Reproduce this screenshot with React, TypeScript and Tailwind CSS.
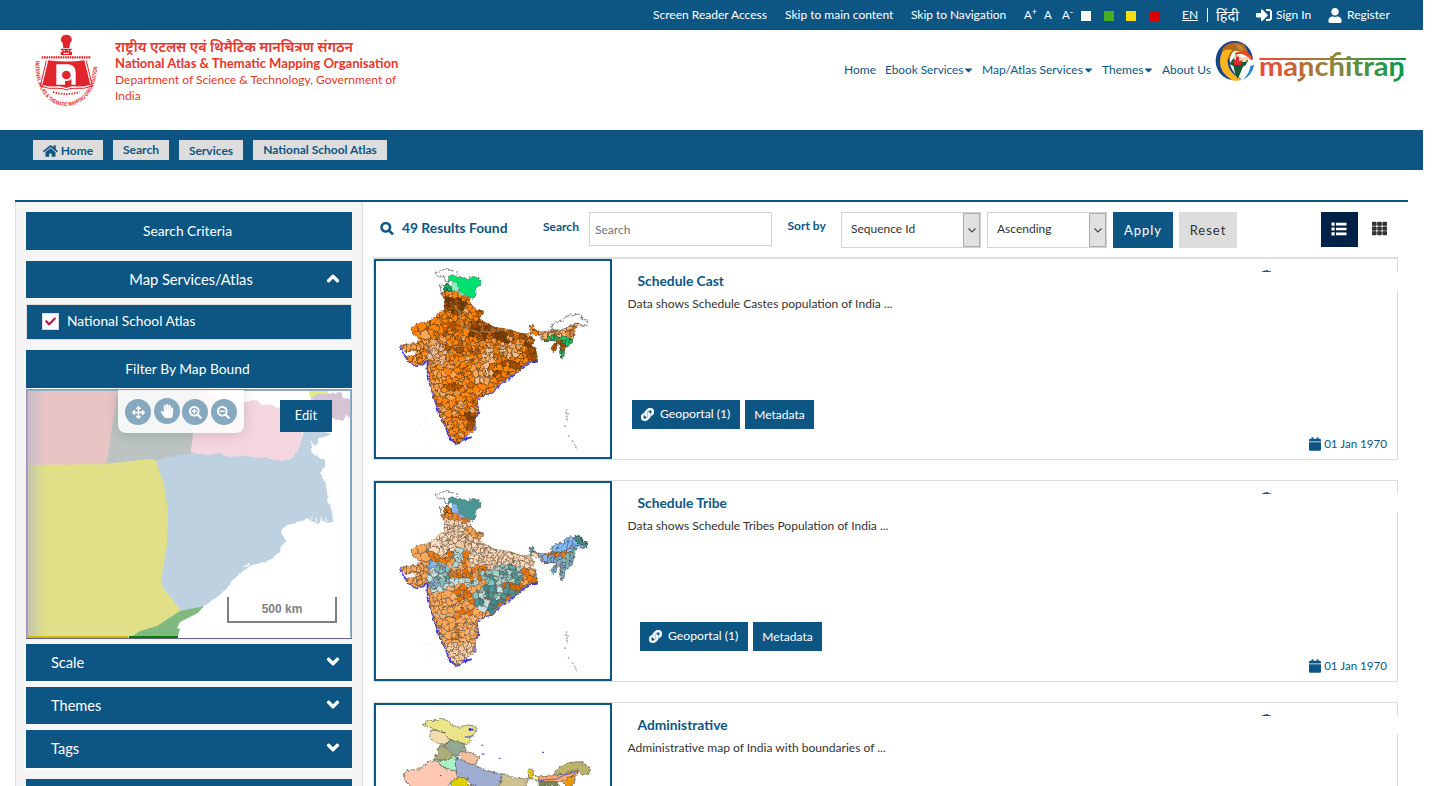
import React from "react";
import {
  FaArrowsAlt, FaCalendar, FaCaretDown, FaCheck, FaChevronDown, FaChevronUp, FaHandPaper,
  FaHome, FaLink, FaSearch, FaSearchMinus, FaSearchPlus, FaSignInAlt, FaTh, FaUser,
} from "react-icons/fa";

type Pt = [number, number];

function rng(seed: number) {
  let s = seed;
  return () => {
    s = (s * 1664525 + 1013904223) % 4294967296;
    return s / 4294967296;
  };
}

function clipHalf(poly: Pt[], a: Pt, b: Pt): Pt[] {
  const mx = (a[0] + b[0]) / 2, my = (a[1] + b[1]) / 2;
  const nx = b[0] - a[0], ny = b[1] - a[1];
  const side = (p: Pt) => (p[0] - mx) * nx + (p[1] - my) * ny;
  const out: Pt[] = [];
  poly.forEach((p, i) => {
    const q = poly[(i + 1) % poly.length];
    const sp = side(p), sq = side(q);
    if (sp <= 0) out.push(p);
    if (sp * sq < 0) {
      const t = sp / (sp - sq);
      out.push([p[0] + (q[0] - p[0]) * t, p[1] + (q[1] - p[1]) * t]);
    }
  });
  return out;
}

/** Irregular district cells: Voronoi cells of a jittered grid, sparser in the west. */
function buildCells() {
  const r = rng(77);
  const pts: Pt[] = [];
  for (let y = 40; y < 570; y += 12)
    for (let x = 70; x < 640; x += 13) {
      const px = x + r() * 15, py = y + r() * 14, drop = r();
      const limit = px < 200 && py < 250 ? 0.7 : py > 310 && py < 480 ? 0.38 : 0.15;
      if (drop > limit) pts.push([px, py]);
    }
  return pts.map((p) => {
    let poly: Pt[] = [[p[0] - 34, p[1] - 34], [p[0] + 34, p[1] - 34], [p[0] + 34, p[1] + 34], [p[0] - 34, p[1] + 34]];
    for (const q of pts) {
      if (q !== p && Math.abs(q[0] - p[0]) < 70 && Math.abs(q[1] - p[1]) < 70) poly = clipHalf(poly, p, q);
    }
    return { c: p, d: poly.map((v) => v[0].toFixed(1) + "," + v[1].toFixed(1)).join(" "), k: r() };
  });
}
const cells = buildCells();

const MAINLAND =
  "208,92 197,100 210,120 205,150 188,160 180,172 160,186 130,188 108,205 118,225 135,240 120,250 78,256 80,266 96,276 125,272 128,278 108,288 90,290 100,303 120,315 145,312 160,295 158,330 166,375 180,420 195,465 212,500 225,535 245,552 262,540 275,528 297,512 300,480 310,458 305,420 325,405 350,397 375,372 410,345 430,335 445,318 465,303 487,303 483,265 470,255 480,240 464,222 440,220 400,208 360,202 330,187 313,176 326,153 300,147 288,132 284,112 262,104 245,85 228,92";
const NORTHEAST =
  "462,200 475,192 478,208 500,216 530,210 560,210 585,195 608,185 612,192 598,215 594,240 588,256 570,262 568,285 562,297 555,292 555,262 548,250 543,270 534,278 528,264 545,242 500,242 499,228 465,220";
const LADAKH = "220,50 232,44 252,52 276,56 292,50 308,49 318,62 316,75 302,85 303,105 294,116 272,106 262,100 250,92 246,68 222,64";
const ARUNACHAL = "528,202 540,188 562,182 572,170 592,164 606,160 620,168 620,178 638,180 634,196 622,200 612,190 598,190 580,200 560,210 530,210";

const inside = (c: Pt, cx: number, cy: number, rx: number, ry: number) =>
  ((c[0] - cx) / rx) ** 2 + ((c[1] - cy) / ry) ** 2 < 1;
const pick = (k: number, list: string[]) => list[Math.floor(k * list.length)];

function castFill(c: Pt, k: number) {
  if (c[0] > 495) {
    if (inside(c, 580, 242, 18, 16) || inside(c, 561, 282, 14, 20) || inside(c, 525, 238, 30, 9)) return "#12c46f";
    return c[1] > 240 ? "#b85d0b" : pick(k, ["#f9ad6a", "#fbc393", "#e08a3c"]);
  }
  if (c[0] < 240 && c[1] < 95) return "#17b868";
  if (inside(c, 235, 135, 40, 26)) return pick(k, ["#7a3a00", "#6f3805", "#9d4d04", "#a65100"]);
  if (inside(c, 330, 210, 50, 35)) return pick(k, ["#7a3b00", "#a65100", "#c46409", "#8a4300"]);
  if (inside(c, 420, 230, 60, 26)) return pick(k, ["#a65100", "#e87807", "#7a3b00", "#fba04d"]);
  if (inside(c, 470, 275, 22, 25)) return "#a65100";
  if (inside(c, 235, 205, 40, 30) || inside(c, 270, 265, 60, 22)) return pick(k, ["#ff8309", "#b65800", "#d66b05", "#fb8a1d"]);
  if (inside(c, 190, 280, 28, 32)) return pick(k, ["#f9b67c", "#e5bd96", "#fba858"]);
  if (inside(c, 375, 280, 65, 26)) return pick(k, ["#f9b67c", "#e8c29d", "#fba858", "#e87807"]);
  if (inside(c, 330, 345, 28, 34)) return pick(k, ["#f3bd8c", "#fba858"]);
  if (c[0] < 205 && c[1] > 230) return pick(k, ["#fba04d", "#f98a1c", "#fba858"]);
  if (inside(c, 285, 485, 20, 30)) return pick(k, ["#b65800", "#8b4200", "#ff8309"]);
  if (inside(c, 240, 385, 16, 12)) return "#b65800";
  if (inside(c, 250, 435, 16, 14)) return "#fba858";
  if (inside(c, 395, 330, 50, 32)) return pick(k, ["#d66b05", "#ff8309", "#a65100"]);
  return pick(k, ["#ff8309", "#ff8309", "#ff8309", "#ff8309", "#fb8a1d", "#fba04d", "#d66b05"]);
}

function tribeFill(c: Pt, k: number) {
  if (c[0] > 485) return c[1] < 222 && c[0] > 505 && c[1] > 205 && c[0] < 570 ? "#ef7d15" : pick(k, ["#86b8f2", "#7badea", "#78b4ba"]);
  if (c[0] > 455 && c[1] < 210) return "#50999a";
  if (c[1] < 95) return pick(k, ["#ef7d15", "#cfe3e0", "#e07109"]);
  if (c[1] < 118) return "#ee8730";
  if (inside(c, 300, 145, 40, 20)) return "#ffa858";
  if (inside(c, 190, 285, 32, 50)) return pick(k, ["#4f9799", "#86c2c2", "#c6e2e0", "#86b8f2"]);
  if (inside(c, 340, 350, 42, 42)) return pick(k, ["#4f9799", "#3e8a8c", "#c6e2e0", "#86c2c2"]);
  if (inside(c, 380, 278, 70, 26)) return pick(k, ["#86c2c2", "#4f9799", "#a8d0cf"]);
  if (inside(c, 265, 300, 60, 12)) return "#c3e2df";
  if (inside(c, 245, 232, 14, 28)) return "#b5dbd9";
  if (c[1] > 485) return "#fdcda3";
  if (c[1] < 215 && c[0] < 220 && c[0] > 160) return "#fddcbf";
  if (c[0] < 175) return "#ffa858";
  if (c[1] < 255 && (c[0] > 285 || c[1] < 205)) return pick(k, ["#fdd6b3", "#fddcbf", "#f3c8a2"]);
  if (c[1] < 300) return pick(k, ["#ee7300", "#ffa858", "#f07d10"]);
  if (inside(c, 400, 330, 60, 40)) return pick(k, ["#ee7300", "#4f9799", "#d96800"]);
  if (inside(c, 280, 350, 40, 42) || inside(c, 235, 425, 20, 50)) return pick(k, ["#ee7300", "#ffa858"]);
  return pick(k, ["#ffa858", "#ffa858", "#fba04d", "#ffb570"]);
}

function DistrictMap({ id, fill, ladakh, zone, arunachal, line }: {
  id: string; fill: (c: Pt, k: number) => string; ladakh: string; zone: string; arunachal: string; line: string;
}) {
  const wobble = id + "w";
  return (
    <svg viewBox="3 3 702 588" className="block h-[196px] w-[234px]">
      <clipPath id={id}>
        <polygon points={MAINLAND} />
        <polygon points={NORTHEAST} />
      </clipPath>
      <filter id={wobble} x="-5%" y="-5%" width="110%" height="110%">
        <feTurbulence type="fractalNoise" baseFrequency="0.1" numOctaves="3" seed="4" result="n" />
        <feDisplacementMap in="SourceGraphic" in2="n" scale="12" xChannelSelector="R" yChannelSelector="G" />
      </filter>
      <g filter={"url(#" + wobble + ")"}>
        <polyline points="158,295 158,330 166,375 180,420 195,465 212,500 225,535 245,552 262,540 290,531" fill="none" stroke="#3a30f0" strokeWidth="6" />
        <polyline points="76,262 90,290 102,306 122,318 146,314 160,296" fill="none" stroke="#4a40e8" strokeWidth="4" />
        <polyline points="300,512 300,480 311,458 306,420 326,406 352,399 377,374 412,347 445,322 465,306 487,306" fill="none" stroke="#4a3ff0" strokeWidth="4" />
        <rect x="466" y="294" width="22" height="14" fill="#2a22e8" />
        <g clipPath={"url(#" + id + ")"}>
          {cells.map((cell, i) => (
            <polygon key={i} points={cell.d} fill={fill(cell.c, cell.k)} stroke={line} strokeWidth="1.7" />
          ))}
        </g>
        <polygon points={MAINLAND} fill="none" stroke="#55402c" strokeWidth="1.4" />
        <polygon points={NORTHEAST} fill="none" stroke="#444" strokeWidth="1.6" />
        <polygon points={LADAKH} fill={ladakh} stroke="#5d6b62" strokeWidth="2" />
        <polygon points="232,66 246,68 250,92 270,104 262,106 244,94 228,90" fill={zone} stroke="#667" strokeWidth="1" />
        <path d="M204 74 L226 72 230 92 208 96z M214 72 L218 96 M204 84 L230 82" fill={id === "m1" ? "#17b868" : "#ef7d15"} stroke="#2b3b2b" strokeWidth="2" />
        <polygon points={ARUNACHAL} fill={arunachal} stroke="#444" strokeWidth="2" />
        {arunachal !== "#fff" && (
          <g>
            <polygon points="596,166 608,160 620,168 620,178 637,180 633,196 606,182" fill="#3f8a80" stroke="#333" strokeWidth="2" />
            <path d="M545 205 l8 -18 M560 205 l10 -32 M575 200 l8 -32 M590 192 l4 -28" stroke="#334a66" strokeWidth="2" fill="none" />
          </g>
        )}
        <path d="M180 40 L196 32 218 27 240 35 256 47 M180 40 L190 51 208 50 212 66 222 64 M197 72 L196 98 206 106" fill="none" stroke="#555" strokeWidth="2" />
        <path d="M225 125 L250 150 262 200 300 215 400 212 M160 250 L200 240 240 260 330 250 360 265 440 250 M170 290 L230 310 300 290 310 320 M170 400 L240 395 300 410 M240 400 L270 450 310 455 M210 470 L240 455 260 500" fill="none" stroke="#b9b3ab" strokeWidth="2" />
      </g>
      <path d="M575 448 l-2 12 6 2 -5 10 4 12 M570 496 v5 M579 526 l4 4 M590 542 l8 4 M598 552 l8 16" fill="none" stroke="#aaa" strokeWidth="5" strokeDasharray="5 3" />
      <path d="M134 494 h5 M150 486 h6 M164 510 h3 M148 543 h3" stroke="#ddd" strokeWidth="2" />
    </svg>
  );
}

function AdminMap() {
  const s = { stroke: "#555344", strokeWidth: 2 };
  return (
    <svg viewBox="18 30 702 588" className="block h-[196px] w-[234px]">
      <filter id="adminw" x="-5%" y="-5%" width="110%" height="110%">
        <feTurbulence type="fractalNoise" baseFrequency="0.12" numOctaves="3" seed="9" result="n" />
        <feDisplacementMap in="SourceGraphic" in2="n" scale="12" xChannelSelector="R" yChannelSelector="G" />
      </filter>
      <g filter="url(#adminw)">
        <polygon points="160,88 172,78 200,76 212,70 232,77 250,92 270,98 290,90 310,92 318,100 312,120 296,128 302,140 288,150 262,138 240,134 222,114 196,104 178,96" fill="#ece488" {...s} />
        <polygon points="180,106 200,106 222,114 240,134 228,150 198,144 180,130" fill="#f3dcae" {...s} />
        <polygon points="228,146 242,136 262,138 286,152 288,168 266,182 250,184 236,170 222,154" fill="#94a994" {...s} />
        <polygon points="214,150 226,156 248,178 238,196 190,194 202,178 204,160" fill="#a9ad78" {...s} />
        <polygon points="200,198 238,194 250,186 260,186 256,206 262,224 248,228 232,220 208,208" fill="#a8f3c3" {...s} />
        <polygon points="266,182 274,170 300,172 330,186 314,210 290,204" fill="#f3c0a0" {...s} />
        <polygon points="100,240 112,226 150,222 180,196 200,198 214,214 246,226 262,232 266,250 240,262 220,300 110,300 120,270 104,254" fill="#fec8b1" {...s} />
        <polygon points="260,186 290,204 316,212 344,226 398,238 392,262 360,300 310,276 290,250 262,246 256,208" fill="#9fadd2" {...s} />
        <polygon points="242,264 266,246 294,252 290,268 320,272 310,300 250,300" fill="#ddd000" {...s} />
        <polygon points="396,236 430,248 476,252 466,272 480,285 470,300 380,300 392,262" fill="#cfc08f" {...s} />
        <polygon points="474,226 488,222 490,238 504,246 504,254 476,248" fill="#f0c800" {...s} />
        <polygon points="490,240 504,246 508,258 480,250" fill="#fff3a6" {...s} />
        <polygon points="504,246 548,242 580,238 620,222 630,230 606,244 570,262 510,260" fill="#fbaa69" {...s} />
        <polygon points="548,238 566,218 600,202 634,200 646,210 662,218 656,238 634,238 622,224 580,238" fill="#bdb46c" {...s} />
        <polygon points="506,260 560,260 566,272 508,274" fill="#7a8a52" {...s} />
        <polygon points="596,246 616,240 612,268 590,280 580,262" fill="#e99a10" {...s} />
      </g>
      <path d="M508 256 L560 252 584 240 626 228" stroke="#5a5ae8" strokeWidth="3" fill="none" />
      <path d="M284 126 h20 M334 177 h10 M386 190 h6 M516 172 h6 M334 151 h5 M210 242 h5" stroke="#3a3af0" strokeWidth="3" fill="none" />
      <path d="M296 104 h14 M300 99 v8" stroke="#2a2af0" strokeWidth="5" />
    </svg>
  );
}

function Emblem() {
  return (
    <svg viewBox="0 0 240 240" className="h-[80px] w-[80px] overflow-visible">
      <g fill="#e0262c">
        <path d="M110 22 q2 -8 14 -8 q12 0 14 8 q6 10 -3 18 l-2 14 h-18 l-2 -14 q-9 -8 -3 -18z" />
        <path d="M108 56 h32 v5 h-4 v5 h5 v9 h-34 v-9 h5 v-5 h-4z" />
        <path d="M70 91 Q124 98 178 91 L196 164 Q174 172 150 169 Q134 168 124 174 Q112 168 98 169 Q72 172 52 164z" />
      </g>
      <path d="M116 62 h4 M128 62 h4 M116 70 h16" stroke="#fff" strokeWidth="3" />
      <path d="M64 92 L46 168 Q70 178 98 175 Q116 174 124 180 Q132 174 150 175 Q178 178 202 168 L184 92" stroke="#e0262c" strokeWidth="3" fill="none" />
      <path d="M94 103 H130 Q152 105 152 128 V164 H139 V146 Q134 153 124 153 H120 V164 H94z" fill="#fff" />
      <circle cx="124" cy="135" r="13" fill="#e0262c" />
      <path d="M50 82 H198" stroke="#e0262c" strokeWidth="7" strokeDasharray="5 2" />
      <path d="M84 186 Q124 198 164 186" stroke="#e0262c" strokeWidth="6" strokeDasharray="4 4" fill="none" />
      <path id="ring" d="M32 92 C22 274 226 274 216 92" fill="none" />
      <text fill="#e0262c" fontFamily="Liberation Sans" fontWeight="700" fontSize="17">
        <textPath href="#ring" textLength="352" lengthAdjust="spacingAndGlyphs">NATIONAL ATLAS &amp; THEMATIC MAPPING ORGANISATION</textPath>
      </text>
    </svg>
  );
}

function Manchitran() {
  return (
    <svg viewBox="0 0 600 132" className="h-[44px] w-[200px]">
      <defs>
        <linearGradient id="mg" gradientUnits="userSpaceOnUse" x1="136" y1="0" x2="572" y2="0">
          <stop offset="0" stopColor="#f0483a" />
          <stop offset="0.5" stopColor="#8f8437" />
          <stop offset="1" stopColor="#009b4c" />
        </linearGradient>
        <linearGradient id="gg" x1="0" y1="0" x2="1" y2="1">
          <stop offset="0" stopColor="#15417e" />
          <stop offset="1" stopColor="#1d4ba0" />
        </linearGradient>
      </defs>
      <ellipse cx="58" cy="62" rx="56" ry="59" fill="url(#gg)" />
      <path d="M22 26 Q48 -4 88 14 L100 38 84 52 62 48 44 60 24 48z" fill="#b9691c" />
      <path d="M40 22 l14 10 10 -14 8 20 -20 14z" fill="#8d7a2a" />
      <path d="M60 12 l20 6 8 16 -16 -6z" fill="#c98a3c" />
      <path d="M22 34 Q-2 90 52 121 Q70 124 82 119 Q40 100 38 66 Q36 48 52 30 Q34 26 22 34z" fill="#fbb51b" />
      <path d="M56 34 Q40 50 46 76 Q54 102 82 119 L100 106 Q116 86 116 62 Q94 28 56 34z" fill="#fff" />
      <path d="M60 38 Q98 22 115 60 L104 58 Q88 36 60 44z" fill="#ee4a1d" />
      <path d="M54 56 l10 -12 12 14 24 2 -8 16 -8 4 -10 24 -6 12 -8 -18 -5 -20 -12 -6z" fill="#185a35" />
      <path d="M54 54 l14 -10 12 8 24 0 -12 14 -24 0z" fill="#f3d3b0" />
      <path d="M54 60 q14 8 28 0 l-4 15 h-20z" fill="#e2232a" />
      <path d="M63 50 h9 v14 h-9z" fill="#e2232a" />
      <path d="M84 119 Q110 108 118 74 L106 78 Q104 100 84 119z" fill="#2388d3" />
      <rect x="133" y="54" width="440" height="6" fill="url(#mg)" />
      <text x="132" y="108" textLength="438" lengthAdjust="spacingAndGlyphs" fill="url(#mg)" fontFamily="Lato" fontWeight="700" fontSize="78">manchitran</text>
      <path d="M268 102 q-2 16 -20 20 M558 102 q-4 18 -22 20 M356 50 q8 -14 22 -8" stroke="url(#mg)" strokeWidth="8" fill="none" />
    </svg>
  );
}

function BoundMap() {
  return (
    <svg viewBox="26 389 326 250" className="block h-[250px] w-[326px]">
      <defs>
        <linearGradient id="fade" x1="0" x2="1" y1="0" y2="0">
          <stop offset="0" stopColor="#b0b8c8" stopOpacity="0.65" />
          <stop offset="1" stopColor="#b0b8c8" stopOpacity="0" />
        </linearGradient>
        <filter id="coast" x="-2%" y="-2%" width="104%" height="104%">
          <feTurbulence type="fractalNoise" baseFrequency="0.2" numOctaves="2" seed="3" result="n" />
          <feDisplacementMap in="SourceGraphic" in2="n" scale="3" xChannelSelector="R" yChannelSelector="G" />
        </filter>
      </defs>
      <rect x="26" y="389" width="326" height="250" fill="#fff" />
      <polygon points="26,389 119,389 114,420 111,440 109,455 105,466 26,467" fill="#e8c4c5" />
      <g filter="url(#coast)">
        <polygon points="199,380 210,392 230,403 245,402 257,400 258,404 272,405 290,411 300,424 303,437 297,452 291,459 282,462 275,462 190,462 185,453 192,435 195,410" fill="#f4d6e1" />
        <polygon points="303,432 312,431 325,432 331,434 325,437 318,438 318,443 314,446 312,440 311,452 317,457 325,460 325,467 320,473 326,484 328,500 332,512 333,522 326,523 322,520 318,523 310,521 308,518 300,522 287,525 282,529 281,533 286,541 281,547 280,551 270,560 250,566 243,571 234,579 227,588 219,596 203,606 180,613 170,598 163,590 160,582 162,568 166,545 167,510 163,485 155,461 165,457 178,454 190,453 208,455 221,453 226,457 240,456 265,458 282,461 291,459 297,452 303,437" fill="#bed1e1" />
        <polygon points="308,380 328,380 328,393 316,394 310,398" fill="#dced7b" />
        <polygon points="310,398 316,394 330,393 341,392 343,398 356,400 356,420 346,415 343,421 332,418 320,408" fill="#d6c3d3" />
        <path d="M243 567 l6 -4 1 2 -6 2z" fill="#fff" />
        <path d="M311 517 v5 M316 518 v5 M321 517 v5 M326 518 v5" stroke="#fff" strokeWidth="0.8" />
      </g>
      <polygon points="119,389 199,389 195,410 192,435 190,453 165,457 155,461 105,466 109,455 111,440 114,420" fill="#bbc4c3" stroke="#bbc4c3" strokeWidth="1.5" />
      <polygon points="26,466 105,465 150,460 155,461 163,485 167,510 166,545 162,568 160,582 163,590 170,598 180,611 160,625 140,630 128,639 26,639" fill="#e1df88" stroke="#e1df88" strokeWidth="2" />
      <polygon points="128,639 140,631 157,626 180,611 204,606 198,613 180,622 177,628 180,629 177,639" fill="#81ba80" />
      <rect x="27" y="391" width="18" height="246" fill="url(#fade)" />
      <rect x="27" y="636" width="101" height="2" fill="#c8c000" />
      <rect x="129" y="636" width="49" height="2" fill="#008000" />
      <rect x="26.5" y="389.5" width="325" height="249" fill="none" stroke="#9c94b8" />
      <path d="M26 638.5 H352" stroke="#6a5c94" />
      <path d="M27 390.5 H351 M27.5 391 V636 M350.5 391 V637" stroke="#8fb0cb" fill="none" />
    </svg>
  );
}

const TopLinks = () => (
  <div className="flex h-[30px] items-center bg-[#0d5683] pl-[653px] text-[12px] text-white">
    <span className="w-[132px]">Screen Reader Access</span>
    <span className="w-[126px]">Skip to main content</span>
    <span className="w-[113px] tracking-[-0.05px]">Skip to Navigation</span>
    <span className="w-[20px] text-[11.5px]">A<sup className="text-[9px]">+</sup></span>
    <span className="w-[18px] text-[11.5px]">A</span>
    <span className="w-[19px] text-[11.5px]">A<sup className="text-[9px]">-</sup></span>
    <span className="mt-[2px] mr-[13px] h-[10px] w-[10px] bg-white" />
    <span className="mt-[2px] mr-[12px] h-[10px] w-[10px] bg-[#46ac20]" />
    <span className="mt-[2px] mr-[13px] h-[10px] w-[10px] bg-[#f5df12]" />
    <span className="mt-[2px] mr-[23px] h-[10px] w-[10px] bg-[#d90000]" />
    <span className="w-[25px] underline">EN</span>
    <span className="mr-[8px] h-[14px] w-px bg-white" />
    <span className="w-[40px] font-sans text-[14.5px] leading-none">हिंदी</span>
    <FaSignInAlt className="mr-[4px] h-[16px] w-[16px]" />
    <span className="w-[52px]">Sign In</span>
    <FaUser className="mr-[5px] h-[15px] w-[14px]" />
    <span>Register</span>
  </div>
);

const crumbs = [
  { t: "Search", w: "w-[56px] pb-px" },
  { t: "Services", w: "w-[64px] pt-px" },
  { t: "National School Atlas", w: "w-[134px] pb-px" },
];

const barCls = "relative flex w-[326px] items-center bg-[#0d5683] text-white shadow-[0_1px_0_#fff]";
const roundCls = "flex h-[26px] w-[26px] items-center justify-center rounded-full bg-[#86a9c0] text-white";
const chevronCls = "absolute top-[11px] right-[12px] h-[13px] w-[14px] stroke-white stroke-[50px]";

function Sidebar() {
  return (
    <aside className="flex w-[348px] shrink-0 flex-col border-x border-[#ddd] bg-[#f5f5f5] pt-[10px] pl-[10px]">
      <div className={barCls + " h-[38px] justify-center pr-[3px] text-[13.8px]"}>Search Criteria</div>
      <div className={barCls + " mt-[11px] h-[37px] justify-center pl-[4px] text-[14.7px]"}>
        Map Services/Atlas
        <FaChevronUp className={chevronCls} />
      </div>
      <div className="mt-[6px] flex h-[36px] w-[326px] items-center border border-[#ddd] bg-[#0d5683] pb-px pl-[15px] text-[13.8px] text-white">
        <span className="mr-[8px] flex h-[17px] w-[17px] items-center justify-center border border-[#ddd] bg-white">
          <FaCheck className="h-[11px] w-[11px] text-[#b01c45]" />
        </span>
        National School Atlas
      </div>
      <div className={barCls + " mt-[10px] h-[38px] justify-center pr-[3px] text-[13.8px]"}>Filter By Map Bound</div>
      <div className="relative mt-px h-[250px] w-[326px] overflow-hidden">
        <BoundMap />
        <div className="absolute top-[1px] left-[92px] flex h-[43px] w-[126px] items-start gap-[2.6px] rounded-b-[8px] bg-white/85 pt-[9px] pl-[7px] shadow-[0_2px_14px_rgba(0,0,0,0.15)]">
          <span className={roundCls}><FaArrowsAlt className="h-[13px] w-[13px]" /></span>
          <span className={roundCls + " mt-[-1px]"}><FaHandPaper className="h-[14px] w-[14px]" /></span>
          <span className={roundCls}><FaSearchPlus className="h-[13px] w-[13px]" /></span>
          <span className={roundCls}><FaSearchMinus className="h-[13px] w-[13px]" /></span>
        </div>
        <div className="absolute top-[11px] left-[254px] flex h-[32px] w-[52px] items-center justify-center bg-[#0d5683] text-[13px] text-white">Edit</div>
        <div className="absolute top-[208px] left-[201px] flex h-[26px] w-[110px] items-center justify-center border-2 border-t-0 border-[#808080] font-['Liberation_Sans'] text-[12px] font-bold text-[#808080]">500 km</div>
      </div>
      {["Scale", "Themes", "Tags"].map((t, i) => (
        <div key={t} className={barCls + " pl-[25px] text-[14.6px] " + (i === 0 ? "mt-[5px] h-[37px]" : i === 1 ? "mt-[6px] h-[37px]" : "mt-[6px] h-[38px]")}>
          {t}
          <FaChevronDown className={chevronCls} />
        </div>
      ))}
      <div className={barCls + " mt-[11px] h-[38px]"} />
    </aside>
  );
}

const SelectBox = ({ text, cls }: { text: string; cls: string }) => (
  <div className={"flex h-[36px] justify-between border border-[#ced4da] bg-white pl-[9px] text-[12px] text-[#333] " + cls}>
    <span className="pt-[7px]">{text}</span>
    <span className="flex w-[17px] items-center justify-center border border-[#adadad] bg-[#e1e1e1]">
      <svg viewBox="0 0 8 5" className="h-[5px] w-[8px]"><path d="M0.5 0.5 L4 4 L7.5 0.5" fill="none" stroke="#444" strokeWidth="1.1" /></svg>
    </span>
  </div>
);

const ListIcon = () => (
  <svg viewBox="0 0 16 14" className="h-[14px] w-[16px]" fill="currentColor">
    <path d="M0.5 0.5h3.2v3.2h-3.2z M0.5 5.4h3.2v3.2h-3.2z M0.5 10.3h3.2v3.2h-3.2z M5 0.8h10.5v2.6H5z M5 5.7h10.5v2.6H5z M5 10.6h10.5v2.6H5z" />
  </svg>
);

const Toolbar = () => (
  <div className="flex h-[55px] items-start pt-[10px] pl-[17px] text-[#0d5683]">
    <FaSearch className="mt-[10px] mr-[8px] h-[13px] w-[14px] stroke-current stroke-[20px]" />
    <span className="mt-[6px] w-[141px] text-[13.8px] font-bold">49 Results Found</span>
    <span className="mt-[6px] w-[46px] text-[12px] font-bold">Search</span>
    <div className="mr-[15px] h-[34px] w-[183px] border border-[#ced4da] bg-white pt-[8px] pl-[5px] text-[12px] text-[#6c757d]">Search</div>
    <span className="mt-[5px] w-[54px] pl-[0.5px] text-[12px] font-bold">Sort by</span>
    <SelectBox text="Sequence Id" cls="w-[140px] mr-[6px]" />
    <SelectBox text="Ascending" cls="w-[120px] mr-[6px]" />
    <div className="mr-[6px] flex h-[36px] w-[60px] items-center justify-center bg-[#0d5683] pt-px text-[13px] tracking-[1px] text-white">Apply</div>
    <div className="mr-[84px] flex h-[36px] w-[58px] items-center justify-center bg-[#ddd] pt-px text-[13px] tracking-[1px] text-[#333]">Reset</div>
    <div className="mr-[14px] flex h-[35px] w-[37px] items-center justify-center bg-[#002147] pr-px pb-[2px] text-white"><ListIcon /></div>
    <FaTh className="mt-[8px] h-[17px] w-[15px] text-[#333] stroke-current stroke-[15px]" />
  </div>
);

function Card({ title, text, offset, children }: { title: string; text: string; offset: string; children: React.ReactNode }) {
  return (
    <article className="relative mb-[20px] flex h-[202px] w-[1025px] border border-[#ddd]">
      <div className="h-[200px] w-[238px] shrink-0 border-2 border-[#0d5683] bg-white">{children}</div>
      <div className="flex grow flex-col">
        <h3 className="mt-[12px] ml-[25.5px] h-[20px] text-[13.8px] leading-[20px] font-bold text-[#0d5683]">{title}</h3>
        <p className="mt-[3px] ml-[15.5px] h-[20px] text-[12.05px] leading-[20px] text-[#333]">{text}</p>
        <div className={"mt-[86px] flex gap-[5px] text-[12px] text-white " + offset}>
          <span className="flex h-[29px] w-[108px] items-center bg-[#0d5683] pl-[9px] text-[12.2px]"><FaLink className="mr-[6px] h-[13px] w-[13px] stroke-white stroke-[30px]" />Geoportal (1)</span>
          <span className="flex h-[29px] w-[69px] items-center justify-center bg-[#0d5683]">Metadata</span>
        </div>
        <div className="mt-[6px] mr-[10px] flex items-center justify-end gap-[3px] text-[11.6px] text-[#0d5683]">
          <FaCalendar className="h-[14px] w-[12px]" />01 Jan 1970
        </div>
      </div>
      <div className="absolute top-[11px] left-[888px] h-[2px] w-[9px] overflow-hidden text-[#0d5683]">
        <svg viewBox="0 0 9 2" className="block h-[2px] w-[9px]"><path d="M0 2 V1.2 H2 V0.4 H3.5 V1 H4 V0 H5.5 V0.8 H7 V1.3 H9 V2z" fill="currentColor" /></svg>
      </div>
      <div className="absolute top-[13px] right-[-1px] h-[18px] w-[140px] bg-white" />
    </article>
  );
}

export default function App() {
  return (
    <div className="h-[786px] w-[1440px] overflow-hidden bg-white font-['Lato','Noto_Sans',sans-serif] whitespace-nowrap">
      <div className="w-[1423px]">
        <TopLinks />
        <header className="flex h-[100px] items-start">
          <div className="ml-[25px] w-[90px]"><Emblem /></div>
          <div className="flex w-[290px] flex-col pt-[8px] text-[#e9362b]">
            <span className="h-[17px] text-[14.25px] leading-[17px] font-semibold">राष्ट्रीय एटलस एवं थिमैटिक मानचित्रण संगठन</span>
            <span className="h-[17px] text-[13.05px] leading-[17px] font-bold">National Atlas &amp; Thematic Mapping Organisation</span>
            <span className="h-[32px] text-[12.05px] leading-[16px]">Department of Science &amp; Technology, Government of<br />India</span>
          </div>
          <nav className="ml-[439px] flex pt-[31px] text-[12px] text-[#0d5683]">
            <span className="w-[41px]">Home</span>
            <span className="flex w-[97px] items-center text-[11.8px]">Ebook Services<FaCaretDown className="ml-px h-[12px] w-[9px]" /></span>
            <span className="flex w-[120px] items-center">Map/Atlas Services<FaCaretDown className="ml-px h-[12px] w-[9px]" /></span>
            <span className="flex w-[60px] items-center">Themes<FaCaretDown className="ml-px h-[12px] w-[9px]" /></span>
            <span className="w-[53px] text-[11.9px]">About Us</span>
          </nav>
          <div className="pt-[10px]"><Manchitran /></div>
        </header>
        <div className="flex h-[40px] items-center gap-[10px] bg-[#0d5683] pl-[33px] text-[12px] font-bold text-[#0d5683]">
          <span className="flex h-[20px] w-[70px] items-center justify-center bg-[#ddd] pt-px"><FaHome className="mr-[3px] h-[14px] w-[15px]" />Home</span>
          {crumbs.map((c) => (
            <span key={c.t} className={"flex h-[20px] items-center justify-center bg-[#ddd] " + c.w}>{c.t}</span>
          ))}
        </div>
        <main className="mt-[30px] ml-[15px] flex h-[640px] w-[1393px] border-t-2 border-[#0d5683]">
          <Sidebar />
          <section className="w-[1045px]">
            <Toolbar />
            <div className="ml-[10px] h-px w-[1025px] bg-[#ddd]" />
            <div className="ml-[10px]">
              <Card title="Schedule Cast" text="Data shows Schedule Castes population of India ..." offset="ml-[20px]">
                <DistrictMap id="m1" fill={castFill} ladakh="#00e070" zone="#8df0b8" arunachal="#fff" line="#4f2c06" />
              </Card>
              <Card title="Schedule Tribe" text="Data shows Schedule Tribes Population of India ..." offset="ml-[28px]">
                <DistrictMap id="m2" fill={tribeFill} ladakh="#4b9594" zone="#86b8f2" arunachal="#86b8f2" line="#55483a" />
              </Card>
              <Card title="Administrative" text="Administrative map of India with boundaries of ..." offset="ml-[20px]">
                <AdminMap />
              </Card>
            </div>
          </section>
        </main>
      </div>
    </div>
  );
}
